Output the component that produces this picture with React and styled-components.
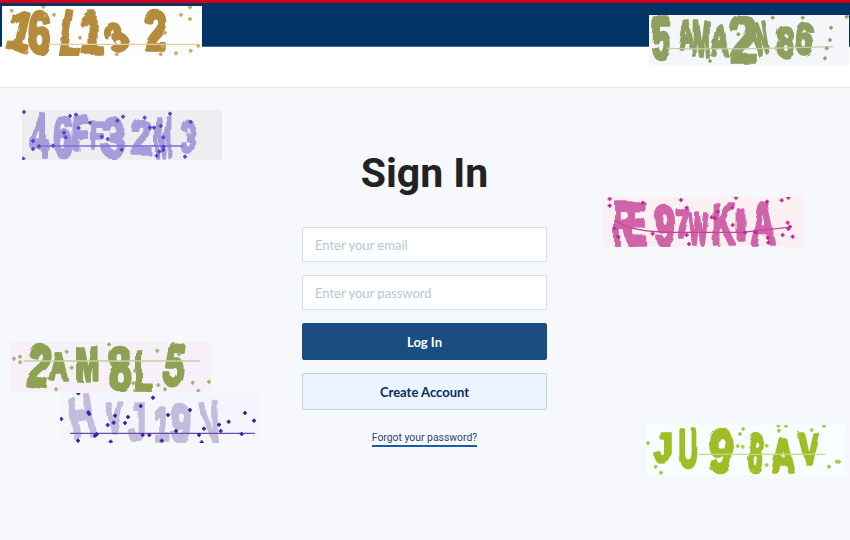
import React from "react";
import styled, { createGlobalStyle } from "styled-components";

const Global = createGlobalStyle`
  html, body { margin: 0; padding: 0; height: 540px; overflow: hidden; background: #f6f8fb; }
  * { box-sizing: border-box; }
`;

const Page = styled.div`
  position: relative;
  width: 850px;
  height: 540px;
  overflow: hidden;
  background: #f6f8fb;
`;
const Header = styled.header`
  background: #fff;
  height: 88px;
  border-top: 3px solid #d0021b;
  border-bottom: 1px solid #e4e9f0;
`;
const NavBar = styled.div`
  height: 44px;
  background: #003366;
  border-bottom: 1px solid #4a6a8c;
`;
const Main = styled.main`
  display: flex;
  flex-direction: column;
  align-items: center;
  padding: 61px 1px 0 0;
`;
const Title = styled.h1`
  margin: 0 0 30px;
  font: 700 41px/48px Roboto, sans-serif;
  color: #222222;
`;
const Form = styled.form`
  width: 245px;
  display: flex;
  flex-direction: column;
  gap: 13px;
`;
const Input = styled.input`
  height: 35px;
  padding: 0 12px;
  border: 1px solid #d3e0ef;
  border-radius: 2px;
  background: #fff;
  font: 400 13px Lato, sans-serif;
  &::placeholder { color: #b4c6de; opacity: 1; }
`;
const Button = styled.button`
  height: 37px;
  border: 1px solid ${(p) => (p.$primary ? "#1a4d80" : "#b8d3ee")};
  border-radius: 2px;
  background: ${(p) => (p.$primary ? "#1a4d80" : "#ebf4ff")};
  color: ${(p) => (p.$primary ? "#ffffff" : "#0b2a5c")};
  font: 700 13px Lato, sans-serif;
`;
const ForgotLink = styled.a`
  margin-top: 21px;
  font: 400 10.4px/14px Roboto, sans-serif;
  color: #1f4a7a;
  border-bottom: 2px solid #1a5da0;
  text-decoration: none;
`;
const CaptchaSvg = styled.svg`
  position: absolute;
  left: ${(p) => p.$x}px;
  top: ${(p) => p.$y}px;
  width: 200px;
  height: 50px;
  background: ${(p) => p.$bg};
`;
const Glyph = styled.text`
  font-family: "Liberation Sans", sans-serif;
  font-weight: 700;
  text-anchor: middle;
`;

const captchas = [
  { id: "a", x: 2, y: 6, vx: 6, vy: 18, bg: "#fbfefc", color: "#b58b3c", dot: "#c9a35f", line: "M145 133H590", lineColor: "#e0cfa8",
    glyphs: [["1",48,150,165,.8,14],["6",118,158,180,.66,0],["L",205,165,190,.62,10],["1",275,158,170,.72,0],["3",372,150,125,.85,-32],["2",468,150,165,.72,0]],
    dots: [[35,32],[135,47],[162,44],[80,155],[240,113],[350,163],[482,163],[528,160],[572,152],[595,137],[570,22],[543,44],[570,57],[495,98],[488,140],[130,20]] },
  { id: "b", x: 649, y: 15, vx: 57, vy: 45, bg: "#f5f6fa", color: "#8f9f5e", dot: "#8f9f5e", line: "M110 145Q300 150 610 140", lineColor: "#c5cfa5",
    glyphs: [["5",92,175,170,.62,0],["A",170,145,115,.55,0],["M",215,170,150,.42,0],["A",270,165,130,.55,0],["2",340,185,195,.78,0],["W",405,165,135,.42,-15],["8",465,168,130,.7,0],["6",525,165,135,.72,0]],
    dots: [[305,82],[325,103],[240,183],[428,53],[518,53],[650,50],[603,83],[600,120],[590,145],[585,175]] },
  { id: "c", x: 22, y: 110, vx: 66, vy: 330, bg: "#f0edf1", color: "#a79ddb", dot: "#5040c8", line: "M115 438H550", lineColor: "#7a6ed8",
    glyphs: [["4",118,465,170,.55,0],["6",190,470,170,.62,0],["F",240,448,140,.58,0],["F",292,445,110,.6,0],["3",340,472,165,.72,0],["2",425,462,145,.75,0],["M",490,470,170,.38,0],["3",560,455,130,.55,5]],
    dots: [[72,336],[210,348],[228,344],[270,368],[352,362],[369,350],[434,353],[510,341],[572,366],[450,383],[462,383],[482,378],[490,412],[490,440],[490,450],[478,455],[470,467],[555,470],[365,449],[305,410],[323,417],[236,384],[192,398],[197,412],[99,423],[117,439],[99,447],[159,437],[70,476]] },
  { id: "d", x: 603, y: 197, vx: 24, vy: 36, bg: "#faf0f1", color: "#cf65a8", dot: "#c0289a", line: "M60 105Q100 140 230 142L440 142L580 127", lineColor: "#c8409f",
    glyphs: [["R",85,180,190,.45,0],["E",125,178,175,.5,0],["9",210,180,165,.68,0],["7",262,155,115,.65,0],["W",310,178,130,.45,0],["K",385,178,170,.58,0],["I",440,165,130,.8,0],["A",505,178,180,.58,0]],
    dots: [[44,42],[44,62],[143,53],[58,130],[70,155],[173,146],[258,45],[275,68],[275,150],[282,177],[350,97],[360,100],[368,80],[412,68],[413,120],[423,38],[516,50],[560,46],[580,38],[450,143],[482,142],[578,113],[585,125],[580,132],[563,150],[593,155],[518,158],[520,173]] },
  { id: "e", x: 11, y: 342, vx: 33, vy: 36, bg: "#f8f0f8", color: "#8ea252", dot: "#9fb26a", line: "M70 93H600", lineColor: "#c5d0a5",
    glyphs: [["2",110,168,175,.72,8],["A",178,150,110,.7,0],["M",262,150,140,.62,0],["8",360,178,175,.72,0],["L",432,185,175,.5,0],["5",515,165,175,.6,8]],
    dots: [[42,86],[60,80],[60,97],[200,65],[215,113],[327,43],[168,178],[405,122],[400,160],[405,182],[472,62],[537,73],[475,165],[495,178],[578,158],[627,155],[595,182],[520,40]] },
  { id: "f", x: 60, y: 393, vx: 180, vy: 189, bg: "#f5f5fd", color: "#c4bcdc", dot: "#3a1a9a", line: "M210 310H765", lineColor: "#6a4ea8",
    glyphs: [["H",255,318,175,.6,-10],["V",345,310,125,.6,0],["J",410,330,160,.62,0],["1",485,330,140,.65,0],["9",545,335,155,.7,0],["V",645,340,180,.45,-10]],
    dots: [[235,190],[184,267],[265,247],[268,252],[345,257],[341,278],[323,285],[384,261],[375,279],[422,228],[459,203],[504,255],[570,240],[528,303],[612,296],[597,315],[657,284],[662,303],[686,275],[735,249],[762,272],[725,312],[605,337],[485,332],[448,315],[428,315],[332,335],[290,313],[285,317],[234,332]] },
  { id: "g", x: 646, y: 425, vx: 33, vy: 30, bg: "#f8feff", color: "#a0bd28", dot: "#a9c440", line: "M190 118H572", lineColor: "#c5d888",
    glyphs: [["J",85,140,125,.8,0],["U",160,155,160,.5,0],["9",258,172,190,.7,0],["8",362,170,165,.5,0],["A",445,172,140,.65,0],["V",520,145,125,.7,0]],
    dots: [[39,84],[62,155],[78,173],[228,160],[325,42],[315,57],[308,93],[323,95],[395,92],[395,150],[355,168],[430,32],[432,47],[453,33],[530,45],[492,65],[567,33],[582,155],[605,140],[612,140]] },
];

function Captcha({ c, seed }) {
  return (
    <CaptchaSvg $x={c.x} $y={c.y} $bg={c.bg} viewBox={`${c.vx} ${c.vy} 600 150`}>
      <filter id={`wob-${c.id}`} x="-5%" y="-20%" width="110%" height="140%">
        <feTurbulence type="fractalNoise" baseFrequency="0.018" numOctaves="1" seed={seed} result="n" />
        <feDisplacementMap in="SourceGraphic" in2="n" scale="22" />
        <feGaussianBlur stdDeviation="2.2" />
      </filter>
      <filter id={`soft-${c.id}`}><feGaussianBlur stdDeviation="1.2" /></filter>
      <g filter={`url(#wob-${c.id})`} fill={c.color} stroke={c.color} strokeWidth="11" strokeLinejoin="round">
        {c.glyphs.map(([ch, x, y, size, sx, rot], i) => (
          <Glyph key={i} transform={`translate(${x} ${y}) rotate(${rot}) scale(${sx} 1)`} fontSize={size}>{ch}</Glyph>
        ))}
      </g>
      <g filter={`url(#soft-${c.id})`}>
        <path d={c.line} fill="none" stroke={c.lineColor} strokeWidth="4" />
        <g stroke={c.dot} strokeWidth="5">
          {c.dots.map(([x, y], i) => (
            <path key={i} d={`M${x - 6} ${y}H${x + 6}M${x} ${y - 6}V${y + 6}`} />
          ))}
        </g>
      </g>
    </CaptchaSvg>
  );
}

export default function App() {
  return (
    <Page>
      <Global />
      <Header><NavBar /></Header>
      <Main>
        <Title>Sign In</Title>
        <Form onSubmit={(e) => e.preventDefault()}>
          <Input type="email" placeholder="Enter your email" />
          <Input type="password" placeholder="Enter your password" />
          <Button $primary>Log In</Button>
          <Button>Create Account</Button>
        </Form>
        <ForgotLink href="#">Forgot your password?</ForgotLink>
      </Main>
      {captchas.map((c, i) => <Captcha key={c.id} c={c} seed={i + 3} />)}
    </Page>
  );
}
